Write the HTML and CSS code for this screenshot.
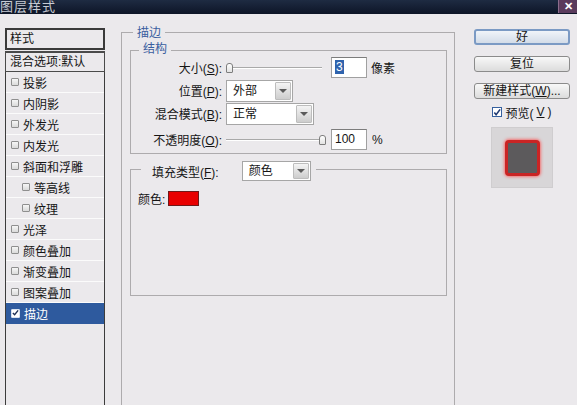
FILE: index.html
```html
<!DOCTYPE html>
<html lang="zh-CN">
<head>
  <meta charset="UTF-8">
  <title>图层样式</title>
  <link rel="stylesheet" href="styles.css">
</head>
<body>
<div class="titlebar">
  <span class="title">图层样式</span>
  <span class="close-btn">✕</span>
</div>

<div class="dialog">
  <!-- 左侧样式列表 -->
  <div class="style-list">
    <div class="list-header">样式</div>
    <div class="list-blend">混合选项:默认</div>
    <div class="list-items">
      <div class="list-item"><span class="check"></span>投影</div>
      <div class="list-item"><span class="check"></span>内阴影</div>
      <div class="list-item"><span class="check"></span>外发光</div>
      <div class="list-item"><span class="check"></span>内发光</div>
      <div class="list-item"><span class="check"></span>斜面和浮雕</div>
      <div class="list-item sub"><span class="check"></span>等高线</div>
      <div class="list-item sub"><span class="check"></span>纹理</div>
      <div class="list-item"><span class="check"></span>光泽</div>
      <div class="list-item"><span class="check"></span>颜色叠加</div>
      <div class="list-item"><span class="check"></span>渐变叠加</div>
      <div class="list-item"><span class="check"></span>图案叠加</div>
      <div class="list-item selected">
        <span class="check checked">
          <svg width="8" height="8" viewBox="0 0 8 8"><path d="M1 4 L3 6 L7 1" fill="none" stroke="#1d2f55" stroke-width="1.6"/></svg>
        </span>描边
      </div>
    </div>
  </div>

  <!-- 中间设置面板 -->
  <div class="main-panel">
    <div class="group outer-group">
      <div class="group-title outer-title">描边</div>

      <div class="group inner-group">
        <div class="group-title inner-title">结构</div>

        <div class="form-row">
          <label class="row-label">大小(<u>S</u>):</label>
          <div class="slider"><span class="thumb"></span><span class="track"></span></div>
          <div class="num-input"><span class="selected-text">3</span></div>
          <span class="unit">像素</span>
        </div>

        <div class="form-row">
          <label class="row-label">位置(<u>P</u>):</label>
          <div class="select pos-select"><span class="select-text">外部</span><span class="select-arrow"></span></div>
        </div>

        <div class="form-row">
          <label class="row-label">混合模式(<u>B</u>):</label>
          <div class="select blend-select"><span class="select-text">正常</span><span class="select-arrow"></span></div>
        </div>

        <div class="form-row opacity-row">
          <label class="row-label">不透明度(<u>O</u>):</label>
          <div class="slider"><span class="track"></span><span class="thumb"></span></div>
          <div class="num-input">100</div>
          <span class="unit percent">%</span>
        </div>
      </div>

      <div class="group fill-group">
        <div class="fill-title">
          <label>填充类型(<u>F</u>):</label>
          <div class="select fill-select"><span class="select-text">颜色</span><span class="select-arrow"></span></div>
        </div>
        <div class="color-row">颜色:<span class="swatch"></span></div>
      </div>
    </div>
  </div>

  <!-- 右侧按钮 -->
  <div class="button-column">
    <button class="btn btn-default">好</button>
    <button class="btn">复位</button>
    <button class="btn">新建样式(<u>W</u>)...</button>
    <label class="preview-check">
      <span class="check-box">
        <svg width="9" height="9" viewBox="0 0 9 9"><path d="M1.5 4.5 L3.5 7 L8 1" fill="none" stroke="#1f3a73" stroke-width="1.8"/></svg>
      </span>预览(<u>V</u>)
    </label>
    <div class="preview-box"><div class="preview-square"></div></div>
  </div>
</div>
</body>
</html>
```

FILE: styles.css
```css
html, body {
  overflow: hidden;
}

body {
  margin: 0;
  height: 405px;
  background-color: #ebe9ec;
  font-family: "Liberation Sans", "Noto Sans CJK SC", sans-serif;
  font-size: 12px;
  color: #151515;
}

/* 标题栏 */
.titlebar {
  height: 14px;
  display: flex;
  background: linear-gradient(#1e2b42, #0d1527);
}

.title {
  font-size: 13px;
  line-height: 14px;
  letter-spacing: 1px;
  color: #c6cad3;
}

.close-btn {
  margin-left: auto;
  width: 18px;
  height: 13px;
  border-left: 1px solid #8c6d8c;
  background-color: #5a3b5c;
  color: #ffffff;
  font-size: 11px;
  font-weight: bold;
  line-height: 13px;
  text-align: center;
}

.dialog {
  display: flex;
  align-items: flex-start;
  padding-left: 5px;
}

/* 样式列表 */
.style-list {
  width: 100px;
  height: 377px;
  margin-top: 14px;
  display: flex;
  flex-direction: column;
}

.list-header {
  height: 22px;
  box-sizing: border-box;
  border: 2px solid #3a3a3a;
  padding-left: 3px;
  line-height: 18px;
}

.list-blend {
  height: 21px;
  box-sizing: border-box;
  margin-top: 1px;
  border: 1px solid #4a4a4a;
  border-top-width: 2px;
  padding-left: 4px;
  line-height: 18px;
}

.list-items {
  flex: 1;
  border-left: 1px solid #3c3c3c;
  border-right: 1px solid #3c3c3c;
}

.list-item {
  height: 21px;
  box-sizing: border-box;
  display: flex;
  align-items: center;
  gap: 4px;
  padding-left: 5px;
  border-bottom: 1px solid #fbfbfb;
}

.list-item.sub {
  padding-left: 16px;
}

.list-item.selected {
  background-color: #2e5a9e;
  color: #ffffff;
  border-bottom-color: #2e5a9e;
}

.check {
  width: 8px;
  height: 8px;
  box-sizing: border-box;
  border: 1px solid #8f8f8f;
  border-radius: 1px;
  background: linear-gradient(#f6f6f6, #dadada);
  display: flex;
  align-items: center;
  justify-content: center;
}

.check.checked {
  width: 9px;
  height: 9px;
  border-color: #d8e2f0;
  background: #ffffff;
}

/* 中间面板 */
.main-panel {
  margin-left: 16px;
  margin-top: 18px;
}

.group {
  border: 1px solid #adabad;
  box-sizing: border-box;
}

.outer-group {
  width: 334px;
  height: 373px;
  border-bottom: none;
  padding: 0 7px 0 8px;
}

.group-title {
  display: table;
  height: 14px;
  line-height: 14px;
  padding: 0 4px;
  background-color: #ebe9ec;
  color: #3a5e9f;
}

.outer-title {
  margin-top: -7px;
  margin-left: 3px;
}

.inner-group {
  margin-top: 10px;
  padding-bottom: 2px;
}

.inner-title {
  margin-top: -9px;
  margin-left: 8px;
}

.form-row {
  height: 23px;
  display: flex;
  align-items: center;
}

.form-row:first-of-type {
  margin-top: 2px;
}

.opacity-row {
  margin-top: 3px;
}

.row-label {
  width: 91px;
  margin-right: 4px;
  text-align: right;
  white-space: nowrap;
}

.slider {
  width: 96px;
  margin-right: 9px;
  display: flex;
  align-items: center;
}

.opacity-row .slider {
  width: 100px;
  margin-right: 5px;
}

.track {
  flex: 1;
  height: 1px;
  background-color: #a9a9a9;
  border-bottom: 1px solid #ffffff;
}

.thumb {
  width: 7px;
  height: 10px;
  box-sizing: border-box;
  border: 1px solid #7d7d7d;
  border-radius: 3px 3px 1px 1px;
  background: linear-gradient(#ffffff, #e2e2e2);
}

.num-input {
  width: 36px;
  height: 21px;
  box-sizing: border-box;
  border: 1px solid #a0a0a0;
  border-top-color: #7c7c7c;
  background-color: #ffffff;
  padding-left: 3px;
  line-height: 19px;
}

.selected-text {
  background-color: #2f63ad;
  color: #ffffff;
  padding: 0 1px;
}

.unit {
  margin-left: 4px;
}

.unit.percent {
  margin-left: 5px;
}

.select {
  height: 22px;
  box-sizing: border-box;
  display: flex;
  border: 1px solid #a6a6a6;
  background-color: #ffffff;
}

.pos-select {
  width: 67px;
}

.blend-select {
  width: 88px;
}

.select-text {
  flex: 1;
  padding-left: 6px;
  line-height: 20px;
}

.select-arrow {
  width: 14px;
  margin: 1px;
  border: 1px solid #bdbdbd;
  border-radius: 1px;
  background: linear-gradient(#f4f4f4, #cdcdcd);
  display: flex;
  align-items: center;
  justify-content: center;
}

.select-arrow::after {
  content: "";
  border-left: 4px solid transparent;
  border-right: 4px solid transparent;
  border-top: 4px solid #5a5a5a;
}

/* 填充类型 */
.fill-group {
  height: 127px;
  margin-top: 15px;
}

.fill-title {
  display: flex;
  align-items: center;
  gap: 23px;
  width: fit-content;
  margin-top: -9px;
  margin-left: 10px;
  padding: 0 5px 0 11px;
  background-color: #ebe9ec;
}

.fill-select {
  width: 69px;
  height: 20px;
}

.fill-select .select-text {
  line-height: 18px;
}

.color-row {
  height: 15px;
  margin-top: 10px;
  padding-left: 7px;
  display: flex;
  align-items: center;
  gap: 3px;
}

.swatch {
  width: 31px;
  height: 15px;
  box-sizing: border-box;
  border: 1px solid #6e1a1a;
  background-color: #e80000;
}

/* 右侧按钮 */
.button-column {
  width: 96px;
  margin-left: 19px;
  margin-top: 15px;
  display: flex;
  flex-direction: column;
  align-items: center;
}

.btn {
  width: 96px;
  height: 16px;
  margin: 0 0 11px 0;
  padding: 0;
  box-sizing: border-box;
  border: 1px solid #8b8b8b;
  border-radius: 3px;
  background: linear-gradient(#f8f8f8, #dcdcdc);
  font-family: "Liberation Sans", "Noto Sans CJK SC", sans-serif;
  font-size: 12px;
  line-height: 13px;
  color: #151515;
}

.btn-default {
  border: 2px solid #7b9ac4;
  background: linear-gradient(#f0f4f9, #d3dce8);
  line-height: 11px;
}

.button-column .btn:nth-of-type(3) {
  margin-bottom: 6px;
}

.preview-check {
  height: 14px;
  display: flex;
  align-items: center;
  gap: 3px;
}

.check-box {
  width: 10px;
  height: 10px;
  box-sizing: border-box;
  border: 1px solid #36609e;
  background-color: #ffffff;
  display: flex;
  align-items: center;
  justify-content: center;
}

.preview-box {
  width: 62px;
  height: 61px;
  margin-top: 8px;
  box-sizing: border-box;
  border: 1px solid #cfcdcf;
  background-color: #d8d6d8;
  display: flex;
  align-items: center;
  justify-content: center;
}

.preview-square {
  width: 35px;
  height: 36px;
  box-sizing: border-box;
  border: 3px solid #c92424;
  border-radius: 4px;
  background-color: #5c5a5c;
  box-shadow: 0 0 3px 1px rgba(255, 70, 70, 0.7);
}
```
